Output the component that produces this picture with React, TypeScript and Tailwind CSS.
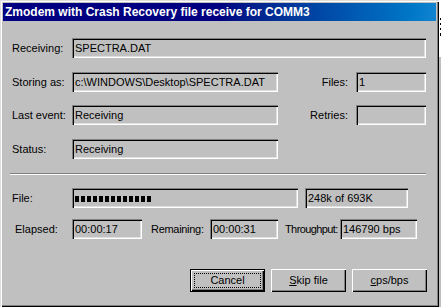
import React from 'react';

const FONT = { fontFamily: '"Liberation Sans", Arial, sans-serif' };

const sunken =
  'bg-[#c0c0c0] shadow-[inset_1px_1px_0_#808080,inset_2px_2px_0_#000,inset_-1px_-1px_0_#fff,inset_-2px_-2px_0_#dfdfdf]';

const Field = ({ w, text, children }: { w: string; text?: string; children?: React.ReactNode }) => (
  <div className={`${w} h-[20px] ${sunken} flex items-center pl-[3px] pt-[1px] text-[11px] text-black whitespace-nowrap overflow-hidden`}>
    {text}
    {children}
  </div>
);

const Label = ({ w, text, className = '' }: { w: string; text: string; className?: string }) => (
  <div className={`${w} shrink-0 text-[11px] text-black whitespace-nowrap ${className}`}>{text}</div>
);

const Button = ({ children, isDefault }: { children: React.ReactNode; isDefault?: boolean }) => (
  <div
    className={`w-[75px] h-[23px] bg-[#c0c0c0] flex items-center justify-center text-[11px] text-black relative ${
      isDefault
        ? 'border border-black shadow-[inset_1px_1px_0_#fff,inset_-1px_-1px_0_#000,inset_-2px_-2px_0_#808080]'
        : 'shadow-[inset_1px_1px_0_#fff,inset_-1px_-1px_0_#000,inset_-2px_-2px_0_#808080]'
    }`}
  >
    {isDefault && <div className="absolute inset-[3px] border border-dotted border-black" />}
    <span className="relative">{children}</span>
  </div>
);

export default function App() {
  const blocks = Array.from({ length: 13 });
  return (
    <div className="flex w-[441px] h-[307px] bg-white overflow-hidden" style={FONT}>
      <div className="w-[439px] h-[307px] shrink-0 bg-[#c0c0c0] p-[3px] shadow-[inset_1px_1px_0_#dfdfdf,inset_2px_2px_0_#fff,inset_-1px_-1px_0_#000,inset_-2px_-2px_0_#808080]">
        <div className="h-[18px] bg-gradient-to-r from-[#000080] via-[#000080] to-[#1084d0] flex items-center pl-[2px]">
          <span className="text-white font-bold text-[12px] leading-none">Zmodem with Crash Recovery file receive for COMM3</span>
        </div>

        <div className="flex flex-col">
          <div className="flex items-center mt-[17px] pl-[9px]">
            <Label w="w-[60px]" text="Receiving:" />
            <Field w="w-[354px]" text="SPECTRA.DAT" />
          </div>

          <div className="flex items-center mt-[14px] pl-[9px]">
            <Label w="w-[60px]" text="Storing as:" />
            <Field w="w-[206px]" text="c:\WINDOWS\Desktop\SPECTRA.DAT" />
            <Label w="w-[70px]" text="Files:" className="text-right" />
            <div className="ml-[8px]">
              <Field w="w-[70px]" text="1" />
            </div>
          </div>

          <div className="flex items-center mt-[13px] pl-[9px]">
            <Label w="w-[60px]" text="Last event:" />
            <Field w="w-[206px]" text="Receiving" />
            <Label w="w-[70px]" text="Retries:" className="text-right" />
            <div className="ml-[8px]">
              <Field w="w-[70px]" />
            </div>
          </div>

          <div className="flex items-center mt-[14px] pl-[9px]">
            <Label w="w-[60px]" text="Status:" />
            <Field w="w-[206px]" text="Receiving" />
          </div>

          <div className="ml-[7px] mt-[14px] w-[416px] border-t border-t-[#808080] border-b border-b-white" />

          <div className="flex items-center mt-[13px] pl-[9px]">
            <Label w="w-[60px]" text="File:" />
            <Field w="w-[226px]">
              <div className="flex gap-[2px] h-[6px]">
                {blocks.map((_, i) => (
                  <div key={i} className="w-[4px] h-[6px] bg-black" />
                ))}
              </div>
            </Field>
            <div className="ml-[7px]">
              <Field w="w-[103px]" text="248k of 693K" />
            </div>
          </div>

          <div className="flex items-center mt-[11px] pl-[9px]">
            <Label w="w-[60px]" text="Elapsed:" className="pl-[3px]" />
            <Field w="w-[70px]" text="00:00:17" />
            <Label w="w-[59px]" text="Remaining:" className="ml-[9px] tracking-[-0.3px]" />
            <Field w="w-[68px]" text="00:00:31" />
            <Label w="w-[55px]" text="Throughput:" className="ml-[7px] text-[10.5px] tracking-[-0.6px]" />
            <Field w="w-[77px]" text="146790 bps" />
          </div>

          <div className="flex justify-end gap-[6px] mt-[30px] pr-[9px]">
            <Button isDefault>Cancel</Button>
            <Button>
              <span className="underline">S</span>kip file
            </Button>
            <Button>
              <span className="underline">c</span>ps/bps
            </Button>
          </div>
        </div>
      </div>

      <div className="w-[2px] h-[307px] flex flex-col">
        <div className="h-[57px] bg-white flex flex-col items-end pt-[18px] gap-[3px]">
          <div className="w-[1px] h-[2px] bg-black" />
          <div className="w-[1px] h-[2px] bg-black" />
          <div className="w-[1px] h-[2px] bg-black" />
          <div className="w-[1px] h-[3px] bg-black" />
        </div>
        <div className="flex-1 bg-[#c0c0c0]" />
      </div>
    </div>
  );
}
